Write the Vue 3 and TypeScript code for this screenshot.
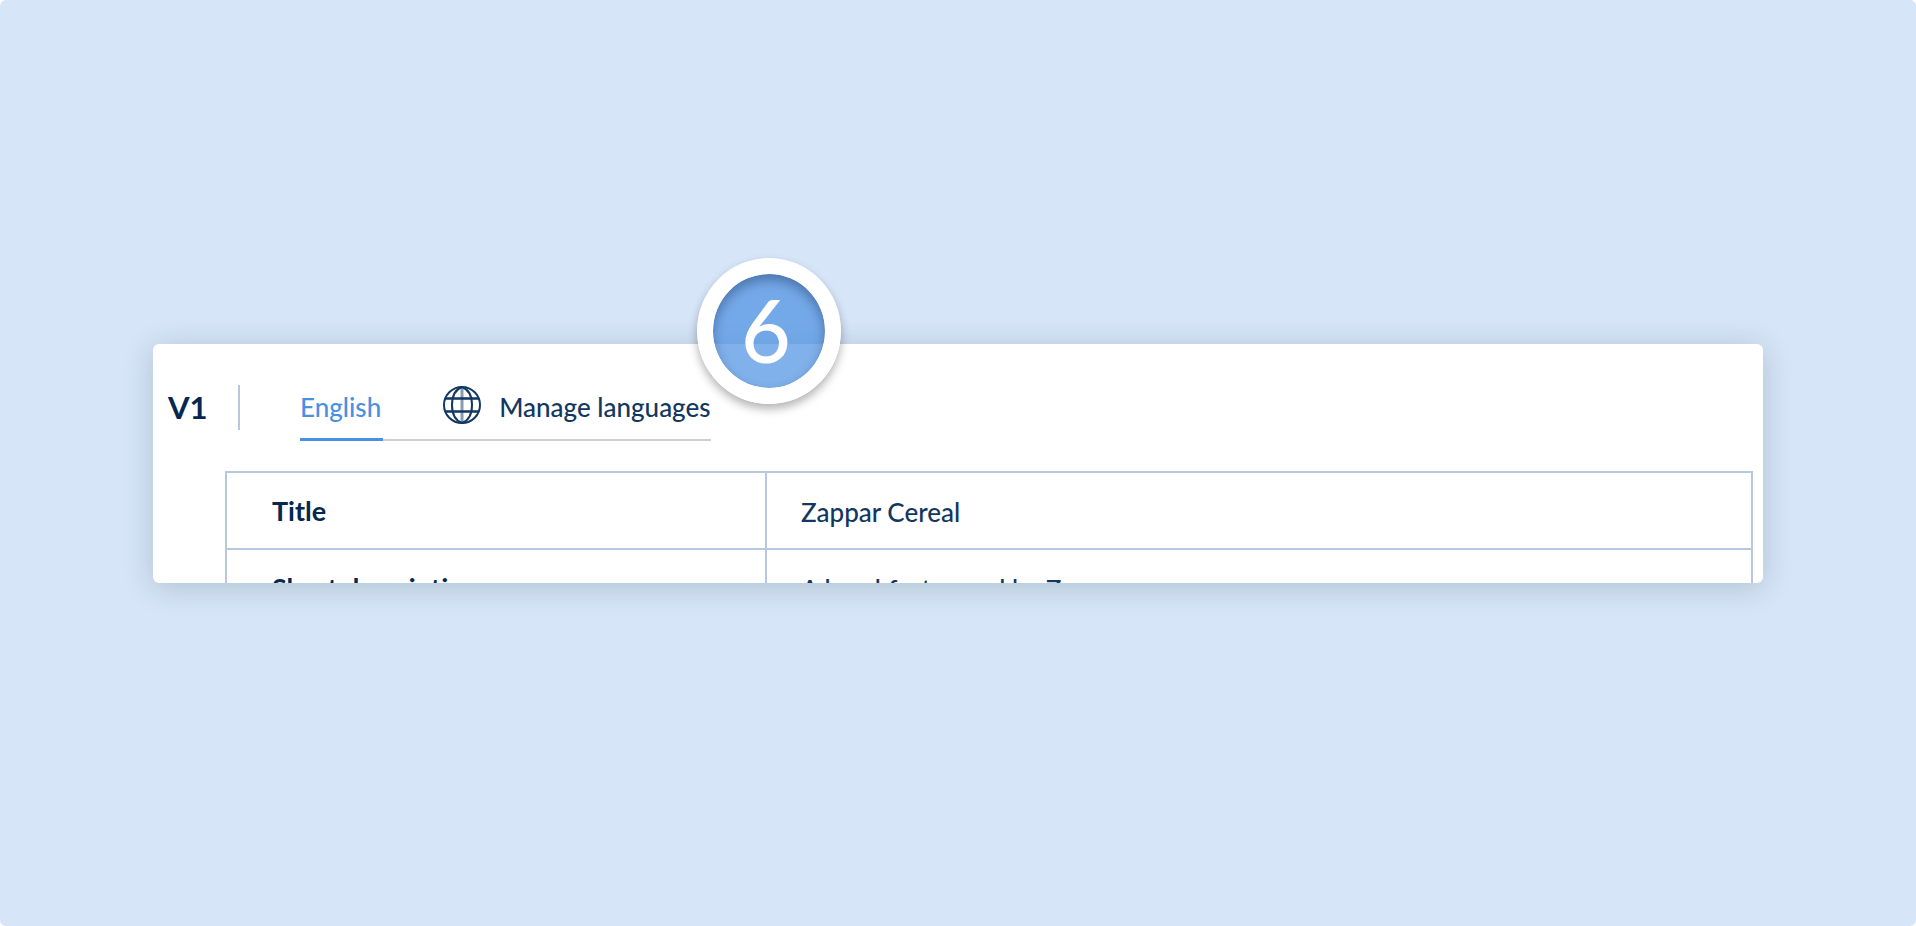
<script setup lang="ts">
interface Row {
  label: string
  value: string
}

const step = 6
const version = 'V1'
const rows: Row[] = [
  { label: 'Title', value: 'Zappar Cereal' },
  { label: 'Short description', value: 'A breakfast cereal by Zappar' },
]
</script>

<template>
  <main class="stage">
    <section class="frame">
      <div class="card">
        <header class="bar">
          <h1 class="version">{{ version }}</h1>
          <span class="divider"></span>
          <nav class="tabs">
            <button type="button" class="tab active">English</button>
            <button type="button" class="tab manage">
              <svg class="globe" viewBox="0 0 38 38" fill="none" stroke="currentColor" stroke-width="2" aria-hidden="true">
                <circle cx="19" cy="19" r="18" />
                <path d="M19 1C11 4 9 12 9 19S11 34 19 37M19 1C27 4 29 12 29 19S27 34 19 37" />
                <path d="M3 12.5H35M3 25.5H35" stroke-width="2.4" />
                <path d="M19 1V37" stroke-width="3" opacity="0.5" />
              </svg>
              <span>Manage languages</span>
            </button>
          </nav>
        </header>
        <table class="fields">
          <tbody>
            <tr v-for="row in rows" :key="row.label">
              <th scope="row">{{ row.label }}</th>
              <td>{{ row.value }}</td>
            </tr>
          </tbody>
        </table>
      </div>
      <span class="badge">{{ step }}</span>
    </section>
  </main>
</template>

<style>
body {
  margin: 0;
  background: #fff;
}
</style>

<style scoped>
.stage {
  box-sizing: border-box;
  min-height: 100vh;
  padding: 0 153px;
  display: flex;
  align-items: center;
  background: #d6e5f8;
  border-radius: 6px;
  font-family: Lato, "Open Sans", sans-serif;
  color: #123761;
}

.frame {
  position: relative;
  flex: 1;
  min-width: 0;
}

.card {
  box-sizing: border-box;
  height: 239px;
  padding: 41px 10px 0 15px;
  overflow: hidden;
  background: #fff;
  border-radius: 6px;
  box-shadow: 0 4px 30px rgba(20, 50, 50, 0.2);
}

.bar {
  display: flex;
  align-items: flex-start;
  height: 56px;
}

.version {
  margin: 0;
  width: 70px;
  font-size: 31px;
  line-height: 44px;
  font-weight: 700;
  color: #04284f;
}

.divider {
  width: 2px;
  height: 45px;
  background: #b7c8de;
}

.tabs {
  display: flex;
  align-items: stretch;
  height: 56px;
  margin-left: 60px;
}

.tab {
  display: flex;
  align-items: center;
  padding: 0 0 9px;
  border: 0;
  border-bottom: 2px solid #cfcfcf;
  background: none;
  font: inherit;
  font-size: 26px;
  font-weight: 500;
  line-height: 32px;
  color: inherit;
  white-space: nowrap;
  cursor: pointer;
}

.active {
  padding-right: 2px;
  color: #4a90e2;
  border-bottom: 3px solid #4a90e2;
}

.manage {
  padding-left: 60px;
  gap: 18px;
}

.globe {
  width: 38px;
  height: 38px;
  margin-bottom: 4px;
}

.fields {
  width: calc(100% - 57px);
  margin: 30px 0 0 57px;
  border-collapse: collapse;
  table-layout: fixed;
  font-size: 26px;
  font-weight: 500;
  line-height: 32px;
}

.fields th,
.fields td {
  height: 77px;
  padding: 4px 34px 0;
  border: 2px solid #b7c8de;
  box-sizing: border-box;
  text-align: left;
}

.fields th {
  width: 540px;
  padding: 2px 0 0 45px;
  font-size: 27px;
  font-weight: 700;
  color: #04284f;
}

.badge {
  position: absolute;
  top: -86px;
  left: 544px;
  box-sizing: border-box;
  width: 144px;
  height: 146px;
  padding-right: 6px;
  border: 16px solid #fff;
  border-radius: 50%;
  background: rgba(74, 144, 226, 0.7);
  background-clip: padding-box;
  box-shadow: 0 5px 10px rgba(0, 0, 0, 0.3), inset 0 6px 12px rgba(0, 20, 60, 0.35);
  color: #fff;
  font-size: 86px;
  font-weight: 500;
  line-height: 112px;
  text-align: center;
}
</style>
